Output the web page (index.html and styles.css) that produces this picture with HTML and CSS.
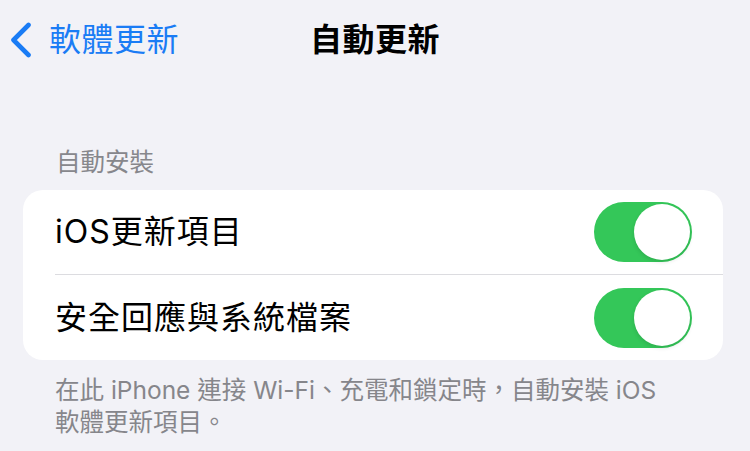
FILE: index.html
```html
<!DOCTYPE html>
<html lang="zh-Hant">
<head>
<meta charset="utf-8">
<link rel="stylesheet" href="styles.css">
</head>
<body>
<header class="nav">
  <a class="back">
    <svg class="chev" width="22" height="36" viewBox="0 0 22 36"><path d="M18.5 3 L3.5 18 L18.5 33" fill="none" stroke="#1a7cf5" stroke-width="4.6" stroke-linecap="round" stroke-linejoin="round"/></svg>
    <span class="back-label">軟體更新</span>
  </a>
  <h1 class="title">自動更新</h1>
  <div></div>
</header>
<main class="content">
  <div class="section-header">自動安裝</div>
  <div class="card">
    <div class="row">
      <div class="row-inner sep">
        <span class="label">iOS更新項目</span>
        <span class="toggle"><span class="knob"></span></span>
      </div>
    </div>
    <div class="row">
      <div class="row-inner">
        <span class="label">安全回應與系統檔案</span>
        <span class="toggle"><span class="knob"></span></span>
      </div>
    </div>
  </div>
  <p class="footer">在此 iPhone 連接 Wi-Fi、充電和鎖定時，自動安裝 iOS<br>軟體更新項目。</p>
</main>
</body>
</html>
```
FILE: styles.css
```css
html, body {
  margin: 0;
  padding: 0;
}
body {
  width: 750px;
  height: 451px;
  overflow: hidden;
  background: #f2f2f7;
  font-family: "Inter", "Noto Sans CJK TC", sans-serif;
  color: #000;
}
.nav {
  height: 80px;
  display: grid;
  grid-template-columns: 1fr auto 1fr;
  align-items: center;
}
.back {
  display: flex;
  align-items: center;
  padding-left: 10px;
  color: #1a7cf5;
}
.chev {
  display: block;
}
.back-label {
  margin-left: 17px;
  font-size: 32px;
  line-height: 40px;
  letter-spacing: 0.5px;
}
.title {
  margin: 0;
  font-size: 32px;
  font-weight: 700;
  line-height: 40px;
  letter-spacing: 0.5px;
}
.content {
  padding: 0 27px 0 23px;
}
.section-header {
  margin-top: 67px;
  padding-left: 33px;
  font-size: 24.5px;
  line-height: 30px;
  color: #87878c;
}
.card {
  margin-top: 13px;
  background: #fff;
  border-radius: 20px;
  overflow: hidden;
}
.row {
  padding-left: 32px;
}
.row-inner {
  height: 85px;
  display: flex;
  align-items: center;
  justify-content: space-between;
  padding-right: 31px;
  box-sizing: border-box;
}
.row-inner.sep {
  border-bottom: 1px solid #dcdce0;
}
.label {
  font-size: 32px;
  letter-spacing: 1px;
  line-height: 40px;
}
.toggle {
  width: 98px;
  height: 60px;
  border-radius: 30px;
  background: #34c759;
  display: flex;
  align-items: center;
  justify-content: flex-end;
  padding: 2px;
  box-sizing: border-box;
}
.knob {
  width: 56px;
  height: 56px;
  border-radius: 50%;
  background: #fff;
  box-shadow: 0 2px 4px rgba(0,0,0,0.12);
}
.footer {
  margin: 14px 0 0;
  padding-left: 32px;
  font-size: 24.5px;
  line-height: 32px;
  color: #86868b;
}
```
